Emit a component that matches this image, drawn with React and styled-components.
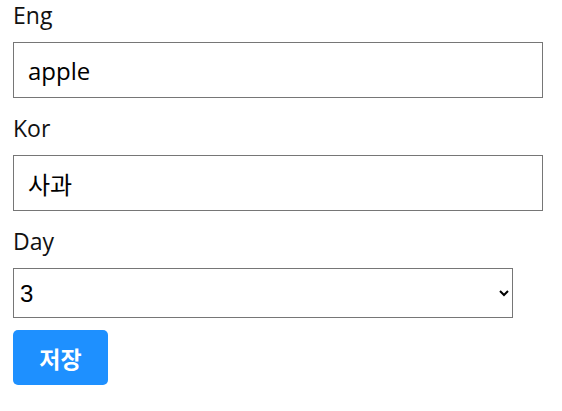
import React, { useState } from 'react';
import styled, { createGlobalStyle } from 'styled-components';

const GlobalStyle = createGlobalStyle`
  body {
    margin: 0;
    background: #fff;
    font-family: "Open Sans", "Noto Sans CJK KR", sans-serif;
  }
`;

const Form = styled.form`
  padding: 0 13px;
`;

const Field = styled.div`
  margin-bottom: 15px;
`;

const Label = styled.label`
  display: block;
  font-size: 23px;
  line-height: 30px;
  color: #111;
  margin-bottom: 12px;
`;

const Input = styled.input`
  box-sizing: border-box;
  display: block;
  width: 530px;
  height: 56px;
  padding: 0 14px;
  border: 1px solid #767676;
  border-radius: 0;
  font-family: "Open Sans", "Noto Sans CJK KR", sans-serif;
  font-size: 24px;
  color: #000;
  outline: none;
`;

const Select = styled.select`
  box-sizing: border-box;
  display: block;
  width: 500px;
  height: 50px;
  padding: 0 2px;
  border: 1px solid #767676;
  border-radius: 0;
  background: #fff;
  font-family: "Liberation Sans", Arial, sans-serif;
  font-size: 24px;
  color: #000;
  margin-bottom: 12px;
`;

const SaveButton = styled.button`
  width: 95px;
  height: 55px;
  border: none;
  border-radius: 5px;
  background: #1e90ff;
  color: #fff;
  font-family: "Noto Sans CJK KR", sans-serif;
  font-size: 23px;
  font-weight: 700;
  cursor: pointer;
`;

const days = [1, 2, 3, 4, 5];

export default function App() {
  const [eng, setEng] = useState('apple');
  const [kor, setKor] = useState('사과');
  const [day, setDay] = useState(3);

  return (
    <>
      <GlobalStyle />
      <Form onSubmit={(e) => e.preventDefault()}>
        <Field>
          <Label>Eng</Label>
          <Input value={eng} onChange={(e) => setEng(e.target.value)} />
        </Field>
        <Field>
          <Label>Kor</Label>
          <Input value={kor} onChange={(e) => setKor(e.target.value)} />
        </Field>
        <Label>Day</Label>
        <Select value={day} onChange={(e) => setDay(Number(e.target.value))}>
          {days.map((d) => (
            <option key={d} value={d}>
              {d}
            </option>
          ))}
        </Select>
        <SaveButton>저장</SaveButton>
      </Form>
    </>
  );
}
